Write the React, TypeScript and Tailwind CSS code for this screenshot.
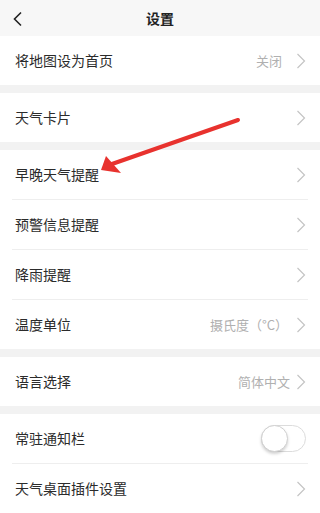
import { ReactNode } from "react";

const Chevron = () => (
  <svg width="10" height="16" viewBox="0 0 10 16" className="shrink-0">
    <path d="M1.5 1 L8.5 8 L1.5 15" fill="none" stroke="#c4c4c4" strokeWidth="1.2" />
  </svg>
);

const Toggle = () => (
  <div className="relative w-[45px] h-[27px] rounded-full border border-[#dcdcdc] bg-white">
    <div className="absolute left-[-1px] top-[-1px] w-[27px] h-[27px] rounded-full bg-white border border-[#d0d0d0] shadow-[0_2px_3px_rgba(0,0,0,0.18)]" />
  </div>
);

interface RowProps {
  label: string;
  value?: string;
  valueClass?: string;
  right?: ReactNode;
  divider?: boolean;
}

const Row = ({ label, value, valueClass = "", right, divider }: RowProps) => (
  <div className="bg-white">
    <div className="h-[49px] flex items-center pl-[15px] pr-[14px]">
      <span className="flex-1 text-[14px] text-[#2b2b2b]">{label}</span>
      {right ?? (
        <div className="flex items-center gap-[8px]">
          {value && <span className={`text-[13px] text-[#b0b0b0] ${valueClass}`}>{value}</span>}
          <Chevron />
        </div>
      )}
    </div>
    {divider && <div className="h-px mx-[12px] bg-[#eeeeee]" />}
  </div>
);

const Gap = () => <div className="h-[8px] bg-[#f2f2f2]" />;

export default function App() {
  return (
    <div
      className="relative w-[320px] h-[513px] overflow-hidden bg-[#f2f2f2]"
      style={{ fontFamily: '"Noto Sans CJK SC", "Noto Sans", sans-serif' }}
    >
      <div className="h-[36px] bg-[#f7f7f7] flex items-center relative">
        <svg width="12" height="16" viewBox="0 0 12 16" className="absolute left-[12px] top-[11px]">
          <path d="M9 1.5 L2.5 8 L9 14.5" fill="none" stroke="#222" strokeWidth="1.6" />
        </svg>
        <span className="flex-1 text-center text-[14px] font-bold text-[#222]">设置</span>
      </div>

      <Row label="将地图设为首页" value="关闭" valueClass="mr-[6px]" />
      <Gap />
      <Row label="天气卡片" />
      <Gap />
      <Row label="早晚天气提醒" divider />
      <Row label="预警信息提醒" divider />
      <Row label="降雨提醒" divider />
      <Row label="温度单位" value="摄氏度（°C）" />
      <Gap />
      <Row label="语言选择" value="简体中文" valueClass="mr-[-2px]" />
      <Gap />
      <Row label="常驻通知栏" right={<Toggle />} divider />
      <Row label="天气桌面插件设置" />

      {/* red annotation arrow */}
      <svg className="absolute left-0 top-0 pointer-events-none" width="320" height="513">
        <line x1="238" y1="120" x2="112" y2="164" stroke="#e8322e" strokeWidth="4" strokeLinecap="round" />
        <polygon points="101,170 106,156 121,173" fill="#e8322e" />
      </svg>
    </div>
  );
}
